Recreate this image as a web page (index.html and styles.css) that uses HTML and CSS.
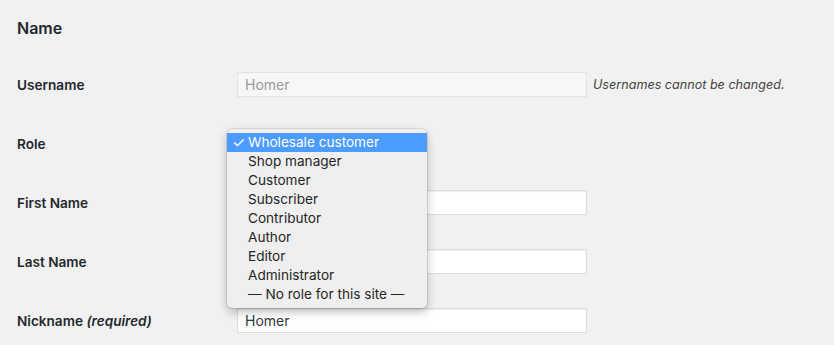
FILE: index.html
```html
<!DOCTYPE html>
<html>
<head>
<meta charset="utf-8">
<link rel="stylesheet" href="styles.css">
</head>
<body>
<h2 class="title">Name</h2>
<div class="form">
  <div class="row">
    <div class="label">Username</div>
    <div class="field">
      <div class="input disabled">Homer</div>
      <span class="desc">Usernames cannot be changed.</span>
    </div>
  </div>
  <div class="row">
    <div class="label">Role</div>
    <div class="field role-field">
      <div class="select"></div>
      <ul class="menu">
        <li class="active"><span class="check">✓</span>Wholesale customer</li>
        <li>Shop manager</li>
        <li>Customer</li>
        <li>Subscriber</li>
        <li>Contributor</li>
        <li>Author</li>
        <li>Editor</li>
        <li>Administrator</li>
        <li>— No role for this site —</li>
      </ul>
    </div>
  </div>
  <div class="row">
    <div class="label">First Name</div>
    <div class="field"><div class="input"></div></div>
  </div>
  <div class="row">
    <div class="label">Last Name</div>
    <div class="field"><div class="input"></div></div>
  </div>
  <div class="row">
    <div class="label">Nickname <em class="req">(required)</em></div>
    <div class="field"><div class="input">Homer</div></div>
  </div>
</div>
</body>
</html>
```

FILE: styles.css
```css
html, body {
  margin: 0;
  padding: 0;
  background: #f1f1f1;
}
body {
  font-family: Inter, "Liberation Sans", Arial, sans-serif;
  color: #23282d;
  padding: 0 17px;
  height: 345px;
  overflow: hidden;
}
.title {
  margin: 0;
  padding-top: 19px;
  height: 21px;
  font-size: 16px;
  line-height: 18px;
  font-weight: 600;
}
.form {
  padding-top: 15px;
}
.row {
  display: flex;
  align-items: center;
  height: 59px;
}
.label {
  width: 220px;
  font-size: 13.6px;
  font-weight: 600;
}
.req {
  font-style: italic;
  font-weight: 600;
}
.field {
  display: flex;
  align-items: center;
  position: relative;
}
.input {
  box-sizing: border-box;
  width: 350px;
  height: 25px;
  background: #fff;
  border: 1px solid #dddddd;
  box-shadow: inset 0 1px 2px rgba(0,0,0,0.07);
  font-size: 14px;
  line-height: 23px;
  padding: 0 7px;
  color: #32373c;
}
.input.disabled {
  background: #f7f7f7;
  color: #9a9a9a;
  border-color: #e2e2e2;
  box-shadow: none;
}
.desc {
  margin-left: 6px;
  font-size: 12.6px;
  font-style: italic;
  color: #444;
}
.select {
  box-sizing: border-box;
  width: 190px;
  height: 25px;
  border: 1px solid #ddd;
  background: #fff;
}
.menu {
  position: absolute;
  z-index: 10;
  left: -10px;
  top: -2px;
  width: 200px;
  margin: 0;
  padding: 4px 0;
  list-style: none;
  background: #efefef;
  border-radius: 5px;
  box-shadow: 0 0 0 0.5px rgba(0,0,0,0.18), 0 4px 10px rgba(0,0,0,0.25);
  font-size: 13.6px;
  color: #262626;
}
.menu li {
  position: relative;
  height: 19px;
  line-height: 19px;
  padding-left: 21px;
  white-space: nowrap;
}
.menu li.active {
  background: #4c9bff;
  color: #fff;
}
.check {
  position: absolute;
  left: 5px;
  top: 0;
  font-size: 15px;
  font-weight: 400;
}
```
